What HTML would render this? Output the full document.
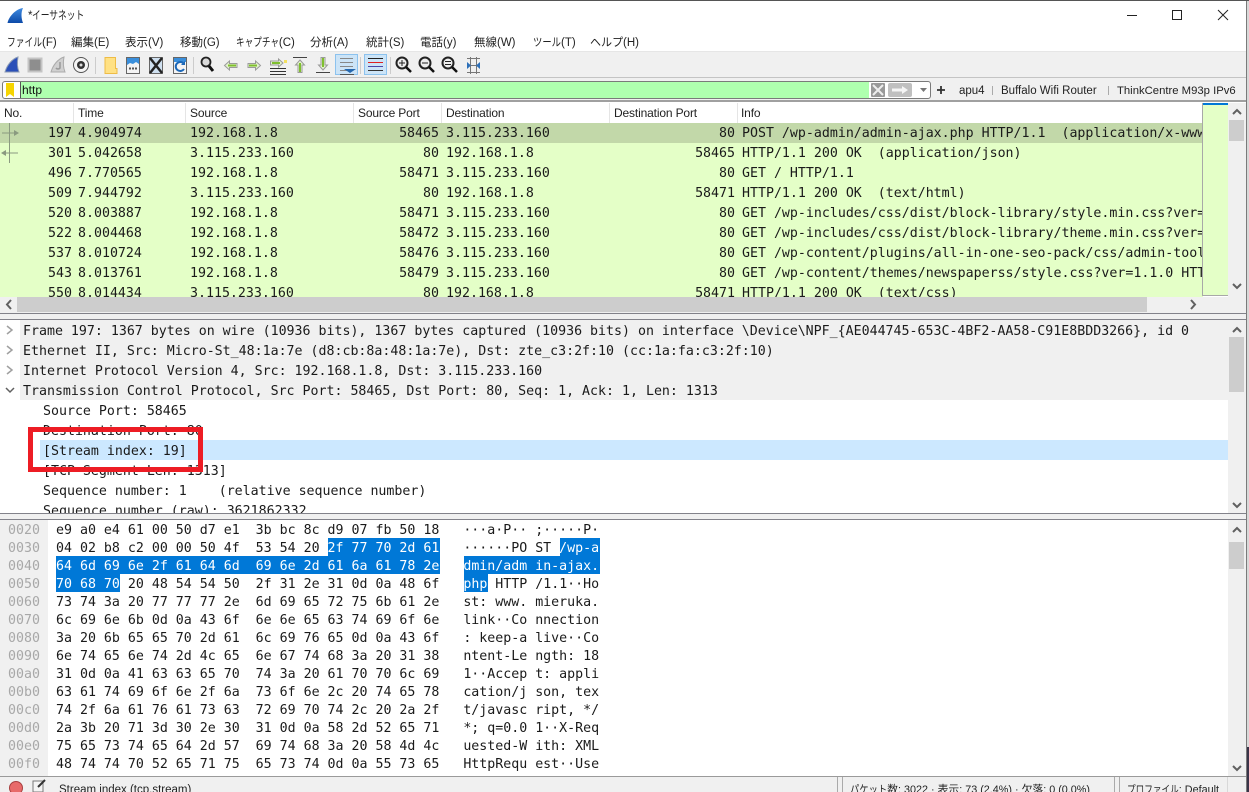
<!DOCTYPE html>
<html lang="ja"><head><meta charset="utf-8"><title>*イーサネット</title>
<style>
*{box-sizing:border-box}
html,body{margin:0;padding:0;width:1249px;height:792px;overflow:hidden;background:#fff}
body{position:relative;font-family:"Liberation Sans","Noto Sans CJK JP",sans-serif;font-size:12px;color:#111}
.a{position:absolute}
.t{position:absolute;white-space:pre}
.m{font-family:"DejaVu Sans Mono","Liberation Mono",monospace;font-size:13.28px;color:#1a1a1a}
.menu span{position:absolute;top:35px;line-height:16px;white-space:pre;font-size:11.5px;color:#222}
i.k{font-style:normal;display:inline-block;transform-origin:left center}
.hd span{position:absolute;top:103px;line-height:20px;font-size:12px;letter-spacing:-.15px;color:#222;white-space:pre}
.v{position:absolute;top:103px;width:1px;height:20px;background:#e5e5e5}
.row{position:absolute;left:0;width:1203px;height:20px;line-height:20px;background:#e4ffc7;overflow:hidden;white-space:pre}
.row span{position:absolute;top:1px;white-space:pre}
.no{right:1131px}.tm{left:78px}.sr{left:190px}.sp{right:764px}.de{left:446px}.dp{right:468px}.in{left:742px}
.dl{position:absolute;height:20px;line-height:24px;white-space:pre;overflow:hidden}
.hx{position:absolute;height:18px;line-height:22px;white-space:pre}
.sel{color:#fff}
.sb{position:absolute;height:18px;background:#0078d7}
.off{color:#a8a8a8}
svg{position:absolute;overflow:visible}
</style></head><body>

<!-- title -->
<div class="a" style="left:0;top:0;width:1249px;height:1px;background:#555"></div>
<svg style="left:7px;top:7px" width="17" height="17" viewBox="0 0 17 17"><defs><linearGradient id="g" x1="0" y1="0" x2="0" y2="1"><stop offset="0" stop-color="#3f8be0"/><stop offset="1" stop-color="#0c4aa8"/></linearGradient></defs><path d="M0.500 16C2 9 9 2 16 1c-2 4-2 10 0 15z" fill="url(#g)"/></svg>
<div class="t" style="left:28px;top:8px;line-height:16px;font-size:11.5px;color:#222">*<i class="k" style="transform:scaleX(.76);margin-right:-17px">イーサネット</i></div>
<svg style="left:1127px;top:9px" width="100" height="14" viewBox="0 0 100 14"><path d="M0 6.500h10" stroke="#222" fill="none"/><rect x="45.500" y="1.500" width="9" height="9" stroke="#222" fill="none"/><path d="M91 1l10 10M101 1L91 11" stroke="#222" fill="none"/></svg>

<!-- menu -->
<div class="menu">
<span style="left:7px"><i class="k" style="transform:scaleX(.76);margin-right:-11px">ファイル</i>(F)</span><span style="left:71px">編集(E)</span><span style="left:125px">表示(V)</span><span style="left:180px">移動(G)</span><span style="left:236px"><i class="k" style="transform:scaleX(.75);margin-right:-14.500px">キャプチャ</i>(C)</span><span style="left:310px">分析(A)</span><span style="left:366px">統計(S)</span><span style="left:420px">電話(y)</span><span style="left:474px">無線(W)</span><span style="left:533px"><i class="k" style="transform:scaleX(.81);margin-right:-6.500px">ツール</i>(T)</span><span style="left:590px"><i class="k" style="transform:scaleX(.96);margin-right:-1.500px">ヘルプ</i>(H)</span>
</div>

<!-- toolbar -->
<div class="a" style="left:0;top:51px;width:1246px;height:27px;background:#f0f0f0;border-top:1px solid #e6e6e6;border-bottom:1px solid #c4c4c4"></div>
<div class="a" style="left:335px;top:54px;width:23px;height:21px;background:#cce4f7;border:1px solid #8cc2ee"></div>
<div class="a" style="left:364px;top:54px;width:23px;height:21px;background:#cce4f7;border:1px solid #8cc2ee"></div>
<svg style="left:0;top:52px" width="490" height="26" viewBox="0 0 490 26">
<path d="M5 20C7 13 12 7 18 5c-1 5-1 10 1 15z" fill="#2a4fb8" stroke="#8a9ab5"/>
<rect x="28.500" y="6.500" width="13" height="13" fill="#8e8e8e" stroke="#c4c4c4" stroke-width="2"/>
<path d="M51 20c2-7 7-13 13-15-1 5-1 10 1 15z" fill="#d0d0d0" stroke="#aaa"/><path d="M60 10v6a2.500 2.500 0 0 1-4 0" fill="none" stroke="#999" stroke-width="1.500"/>
<circle cx="81" cy="13" r="7.500" fill="#f5f5f5" stroke="#555"/><circle cx="81" cy="13" r="4" fill="#333"/><circle cx="81" cy="13" r="1.500" fill="#ddd"/>
<path d="M95.500 5v17M193.500 5v17M360.500 5v17M390.500 5v17" stroke="#ccc"/>
<path d="M105 5.500h10.500v11h1.500v5h-12z" fill="#ffe184" stroke="#eebc46"/>
<rect x="126.500" y="5.500" width="13" height="16" fill="#f4f4f4" stroke="#666"/><path d="M127 6h12v6l-3-2-3 2-3-1-3 2z" fill="#3a8fdc"/><path d="M129 16.500h9" stroke="#555" stroke-width="2" stroke-dasharray="2 1"/>
<rect x="149.500" y="5.500" width="13" height="16" fill="#cfe0f0" stroke="#666"/><path d="M150 6l12 15M162 6L150 21" stroke="#222" stroke-width="2.500"/>
<rect x="173.500" y="5.500" width="13" height="16" fill="#f4f4f4" stroke="#666"/><path d="M174 6h12v4h-12z" fill="#3a8fdc"/><path d="M184 12a4.500 4.500 0 1 0 0 5" fill="none" stroke="#1c68b8" stroke-width="2"/><path d="M185 9v4h-4z" fill="#1c68b8"/>
<circle cx="206" cy="10" r="4.500" fill="#d9d9d9" stroke="#222" stroke-width="1.800"/><path d="M209 14l4 5" stroke="#111" stroke-width="3"/>
<path d="M224.500 13.500l5-4.500v2.500h7.500v4h-7.500v2.500z" fill="#e4f2cf" stroke="#9a9a9a"/><path d="M228 13.500h8" stroke="#7fbf2e" stroke-width="2"/>
<path d="M260.500 13.500l-5-4.500v2.500H248v4h7.500v2.500z" fill="#e4f2cf" stroke="#9a9a9a"/><path d="M249 13.500h8" stroke="#7fbf2e" stroke-width="2"/>
<path d="M270 16.500h16M270 19.500h16M270 22.500h16" stroke="#333"/><path d="M283 11l-4.500-4v2h-8v4h8v2z" fill="#e4f2cf" stroke="#9a9a9a"/><path d="M272 11h8" stroke="#7fbf2e" stroke-width="2"/><rect x="284" y="8" width="3" height="3" fill="#f3e060"/>
<path d="M293 5.500h14" stroke="#444"/><path d="M300 8l4.500 5H302v7.500h-4V13h-2.500z" fill="#e4f2cf" stroke="#9a9a9a"/><path d="M300 11v9" stroke="#7fbf2e" stroke-width="2"/>
<path d="M316 20.500h14" stroke="#444"/><path d="M323 18l4.500-5H325V5.500h-4V13h-2.500z" fill="#e4f2cf" stroke="#9a9a9a"/><path d="M323 6v9" stroke="#7fbf2e" stroke-width="2"/>
<path d="M340 6.500h13M340 10.500h13M340 14.500h13M340 18.500h13" stroke="#888" stroke-width="1"/><path d="M344 17h12l-6 4z" fill="#2468b0"/><path d="M340 22.500h14" stroke="#555"/>
<path d="M368 6.500h15" stroke="#222"/><path d="M368 10.500h15" stroke="#e02020"/><path d="M368 14.500h15" stroke="#4848a8"/><path d="M368 18.500h15" stroke="#333"/>
<g fill="#eee" stroke="#222" stroke-width="2"><circle cx="402" cy="11" r="5.500"/><circle cx="425" cy="11" r="5.500"/><circle cx="448" cy="11" r="5.500"/></g>
<path d="M406 15l5 5M429 15l5 5M452 15l5 5" stroke="#111" stroke-width="2.500"/>
<path d="M399 11h6M402 8v6M422 11h6M445 9.500h6M445 12.500h6" stroke="#222"/>
<path d="M467 6.500h13M467 13.500h13M467 20.500h13M470.500 5v17M476.500 5v17" stroke="#777"/><path d="M467 10l4 3.500-4 3.500zM480 10l-4 3.500 4 3.500z" fill="#2c6fb8"/>
</svg>

<!-- filter bar -->
<div class="a" style="left:0;top:78px;width:1246px;height:24px;background:#f0f0f0;border-bottom:2px solid #a0a0a0"></div>
<div class="a" style="left:2px;top:81px;width:929px;height:18px;background:#fff;border:1px solid #7a7a7a;border-radius:3px"></div>
<div class="a" style="left:20px;top:82px;width:849px;height:16px;background:#afffaf;border-left:1px solid #555"></div>
<svg style="left:6px;top:82px" width="9" height="16" viewBox="0 0 9 16"><path d="M0 1h8v14L4 12 0 15z" fill="#f6d400"/></svg>
<div class="t" style="left:22px;top:83px;line-height:15px;font-size:12px;color:#111">http</div>
<svg style="left:870px;top:82px" width="60" height="16" viewBox="0 0 60 16"><rect x="1" y="1" width="14" height="14" fill="#999" rx="1"/><path d="M3 3l10 10M13 3L3 13" stroke="#eee" stroke-width="2"/><rect x="18" y="1" width="24" height="14" rx="2" fill="#c0c0c0"/><path d="M22 6.500h10V4l6 4-6 4V9.500H22z" fill="#f5f5f5"/><path d="M50 6h7l-3.500 4z" fill="#777"/></svg>
<svg style="left:936px;top:85px" width="10" height="10" viewBox="0 0 10 10"><path d="M5 1v8M1 5h8" stroke="#333" stroke-width="1.800"/></svg>
<div class="t" style="left:959px;top:84px;line-height:15px;font-size:11.500px;color:#222">apu4</div>
<div class="a" style="left:992px;top:86px;width:1px;height:9px;background:#aaa"></div>
<div class="t" style="left:1001px;top:84px;line-height:15px;font-size:11.500px;color:#222">Buffalo Wifi Router</div>
<div class="a" style="left:1108px;top:86px;width:1px;height:9px;background:#aaa"></div>
<div class="t" style="left:1117px;top:84px;line-height:15px;font-size:11.300px;color:#222">ThinkCentre M93p IPv6</div>

<!-- list header -->
<div class="hd">
<span style="left:4px">No.</span><span style="left:78px">Time</span><span style="left:190px">Source</span><span style="left:358px">Source Port</span><span style="left:446px">Destination</span><span style="left:614px">Destination Port</span><span style="left:741px">Info</span>
</div>
<div class="v" style="left:73px"></div><div class="v" style="left:185px"></div><div class="v" style="left:353px"></div><div class="v" style="left:441px"></div><div class="v" style="left:609px"></div><div class="v" style="left:737px"></div>

<!-- packet list -->
<div class="a m" style="left:0;top:123px;width:1203px;height:174px;overflow:hidden">
<div class="row" style="top:0;background:#c2d8a9"><span class="no">197</span><span class="tm">4.904974</span><span class="sr">192.168.1.8</span><span class="sp">58465</span><span class="de">3.115.233.160</span><span class="dp">80</span><span class="in">POST /wp-admin/admin-ajax.php HTTP/1.1  (application/x-www-form-urlencoded)</span></div>
<div class="row" style="top:20px"><span class="no">301</span><span class="tm">5.042658</span><span class="sr">3.115.233.160</span><span class="sp">80</span><span class="de">192.168.1.8</span><span class="dp">58465</span><span class="in">HTTP/1.1 200 OK  (application/json)</span></div>
<div class="row" style="top:40px"><span class="no">496</span><span class="tm">7.770565</span><span class="sr">192.168.1.8</span><span class="sp">58471</span><span class="de">3.115.233.160</span><span class="dp">80</span><span class="in">GET / HTTP/1.1</span></div>
<div class="row" style="top:60px"><span class="no">509</span><span class="tm">7.944792</span><span class="sr">3.115.233.160</span><span class="sp">80</span><span class="de">192.168.1.8</span><span class="dp">58471</span><span class="in">HTTP/1.1 200 OK  (text/html)</span></div>
<div class="row" style="top:80px"><span class="no">520</span><span class="tm">8.003887</span><span class="sr">192.168.1.8</span><span class="sp">58471</span><span class="de">3.115.233.160</span><span class="dp">80</span><span class="in">GET /wp-includes/css/dist/block-library/style.min.css?ver=5.4</span></div>
<div class="row" style="top:100px"><span class="no">522</span><span class="tm">8.004468</span><span class="sr">192.168.1.8</span><span class="sp">58472</span><span class="de">3.115.233.160</span><span class="dp">80</span><span class="in">GET /wp-includes/css/dist/block-library/theme.min.css?ver=5.4</span></div>
<div class="row" style="top:120px"><span class="no">537</span><span class="tm">8.010724</span><span class="sr">192.168.1.8</span><span class="sp">58476</span><span class="de">3.115.233.160</span><span class="dp">80</span><span class="in">GET /wp-content/plugins/all-in-one-seo-pack/css/admin-toolbar</span></div>
<div class="row" style="top:140px"><span class="no">543</span><span class="tm">8.013761</span><span class="sr">192.168.1.8</span><span class="sp">58479</span><span class="de">3.115.233.160</span><span class="dp">80</span><span class="in">GET /wp-content/themes/newspaperss/style.css?ver=1.1.0 HTTP/1.1</span></div>
<div class="row" style="top:160px"><span class="no">550</span><span class="tm">8.014434</span><span class="sr">3.115.233.160</span><span class="sp">80</span><span class="de">192.168.1.8</span><span class="dp">58471</span><span class="in">HTTP/1.1 200 OK  (text/css)</span></div>
</div>
<svg style="left:0;top:123px" width="20" height="40" viewBox="0 0 20 40"><path d="M9.500 0v40M2 10h12M2 30h16" stroke="#8a9a80"/><path d="M19 10l-5-3v6z" fill="#8a9a80"/><path d="M1 30l5-3v6z" fill="#8a9a80"/></svg>

<!-- minimap and list scrollbar -->
<div class="a" style="left:1202px;top:103px;width:26px;height:193px;background:#e4ffc7;border:1px solid #a8a8a8;border-top:0;border-right:0"></div>
<div class="a" style="left:1203px;top:103px;width:25px;height:2px;background:#0078d7"></div>
<div class="a" style="left:1228px;top:103px;width:18px;height:194px;background:#f0f0f0"></div>
<div class="a" style="left:1229px;top:120px;width:15px;height:21px;background:#cdcdcd"></div>
<svg style="left:1228px;top:103px" width="18" height="194" viewBox="0 0 18 194"><path d="M5 11l4-4 4 4M5 181l4 4 4-4" fill="none" stroke="#606060" stroke-width="2"/></svg>

<!-- horizontal scrollbar -->
<div class="a" style="left:0;top:297px;width:1246px;height:16px;background:#f0f0f0"></div>
<div class="a" style="left:17px;top:297px;width:1130px;height:15px;background:#cdcdcd"></div>
<svg style="left:0;top:297px" width="1246" height="16" viewBox="0 0 1246 16"><path d="M11 3L7 7.500l4 4.500M1191 3l4 4.500-4 4.500" fill="none" stroke="#606060" stroke-width="2"/></svg>

<!-- splitter 1 -->
<div class="a" style="left:0;top:313px;width:1246px;height:7px;background:#f0f0f0;border-top:1px solid #82828a;border-bottom:1px solid #82828a"></div>

<!-- details -->
<div class="a" style="left:20px;top:320px;width:1208px;height:80px;background:#f0f0f0"></div>
<div class="a" style="left:40px;top:440px;width:1188px;height:20px;background:#cce8ff"></div>
<div class="a m" style="left:0;top:320px;width:1228px;height:193px;overflow:hidden">
<div class="dl" style="left:23px;top:0;width:1200px">Frame 197: 1367 bytes on wire (10936 bits), 1367 bytes captured (10936 bits) on interface \Device\NPF_{AE044745-653C-4BF2-AA58-C91E8BDD3266}, id 0</div>
<div class="dl" style="left:23px;top:20px">Ethernet II, Src: Micro-St_48:1a:7e (d8:cb:8a:48:1a:7e), Dst: zte_c3:2f:10 (cc:1a:fa:c3:2f:10)</div>
<div class="dl" style="left:23px;top:40px">Internet Protocol Version 4, Src: 192.168.1.8, Dst: 3.115.233.160</div>
<div class="dl" style="left:23px;top:60px">Transmission Control Protocol, Src Port: 58465, Dst Port: 80, Seq: 1, Ack: 1, Len: 1313</div>
<div class="dl" style="left:43px;top:80px">Source Port: 58465</div>
<div class="dl" style="left:43px;top:100px">Destination Port: 80</div>
<div class="dl" style="left:43px;top:120px">[Stream index: 19]</div>
<div class="dl" style="left:43px;top:140px">[TCP Segment Len: 1313]</div>
<div class="dl" style="left:43px;top:160px">Sequence number: 1    (relative sequence number)</div>
<div class="dl" style="left:43px;top:180px">Sequence number (raw): 3621862332</div>
</div>
<svg style="left:0;top:320px" width="20" height="80" viewBox="0 0 20 80"><path d="M7 6l5 4-5 4M7 26l5 4-5 4M7 46l5 4-5 4" fill="none" stroke="#a0a0a0" stroke-width="1.500"/><path d="M6 68l4 4 4-4" fill="none" stroke="#606060" stroke-width="1.500"/></svg>
<div class="a" style="left:1228px;top:320px;width:18px;height:193px;background:#f0f0f0"></div>
<div class="a" style="left:1229px;top:337px;width:15px;height:55px;background:#cdcdcd"></div>
<svg style="left:1228px;top:320px" width="18" height="193" viewBox="0 0 18 193"><path d="M5 12l4-4 4 4M5 183l4 4 4-4" fill="none" stroke="#606060" stroke-width="2"/></svg>

<!-- splitter 2 -->
<div class="a" style="left:0;top:513px;width:1246px;height:7px;background:#f0f0f0;border-top:1px solid #82828a;border-bottom:1px solid #82828a"></div>

<!-- hex -->
<div class="a" style="left:0;top:520px;width:48px;height:256px;background:#f0f0f0"></div>
<div class="sb" style="left:328px;top:538px;width:112px"></div>
<div class="sb" style="left:56px;top:556px;width:384px"></div>
<div class="sb" style="left:56px;top:574px;width:64px"></div>
<div class="sb" style="left:560px;top:538px;width:40px"></div>
<div class="sb" style="left:464px;top:556px;width:136px"></div>
<div class="sb" style="left:464px;top:574px;width:24px"></div>
<div class="a m" style="left:0;top:520px;width:1228px;height:256px;overflow:hidden">
<div class="hx off" style="left:8px;top:0">0020</div><div class="hx" style="left:56px;top:0">e9 a0 e4 61 00 50 d7 e1  3b bc 8c d9 07 fb 50 18   ···a·P·· ;·····P·</div>
<div class="hx off" style="left:8px;top:18px">0030</div><div class="hx" style="left:56px;top:18px">04 02 b8 c2 00 00 50 4f  53 54 20 <span class="sel">2f 77 70 2d 61</span>   ······PO ST <span class="sel">/wp-a</span></div>
<div class="hx off" style="left:8px;top:36px">0040</div><div class="hx" style="left:56px;top:36px"><span class="sel">64 6d 69 6e 2f 61 64 6d  69 6e 2d 61 6a 61 78 2e</span>   <span class="sel">dmin/adm in-ajax.</span></div>
<div class="hx off" style="left:8px;top:54px">0050</div><div class="hx" style="left:56px;top:54px"><span class="sel">70 68 70</span> 20 48 54 54 50  2f 31 2e 31 0d 0a 48 6f   <span class="sel">php</span> HTTP /1.1··Ho</div>
<div class="hx off" style="left:8px;top:72px">0060</div><div class="hx" style="left:56px;top:72px">73 74 3a 20 77 77 77 2e  6d 69 65 72 75 6b 61 2e   st: www. mieruka.</div>
<div class="hx off" style="left:8px;top:90px">0070</div><div class="hx" style="left:56px;top:90px">6c 69 6e 6b 0d 0a 43 6f  6e 6e 65 63 74 69 6f 6e   link··Co nnection</div>
<div class="hx off" style="left:8px;top:108px">0080</div><div class="hx" style="left:56px;top:108px">3a 20 6b 65 65 70 2d 61  6c 69 76 65 0d 0a 43 6f   : keep-a live··Co</div>
<div class="hx off" style="left:8px;top:126px">0090</div><div class="hx" style="left:56px;top:126px">6e 74 65 6e 74 2d 4c 65  6e 67 74 68 3a 20 31 38   ntent-Le ngth: 18</div>
<div class="hx off" style="left:8px;top:144px">00a0</div><div class="hx" style="left:56px;top:144px">31 0d 0a 41 63 63 65 70  74 3a 20 61 70 70 6c 69   1··Accep t: appli</div>
<div class="hx off" style="left:8px;top:162px">00b0</div><div class="hx" style="left:56px;top:162px">63 61 74 69 6f 6e 2f 6a  73 6f 6e 2c 20 74 65 78   cation/j son, tex</div>
<div class="hx off" style="left:8px;top:180px">00c0</div><div class="hx" style="left:56px;top:180px">74 2f 6a 61 76 61 73 63  72 69 70 74 2c 20 2a 2f   t/javasc ript, */</div>
<div class="hx off" style="left:8px;top:198px">00d0</div><div class="hx" style="left:56px;top:198px">2a 3b 20 71 3d 30 2e 30  31 0d 0a 58 2d 52 65 71   *; q=0.0 1··X-Req</div>
<div class="hx off" style="left:8px;top:216px">00e0</div><div class="hx" style="left:56px;top:216px">75 65 73 74 65 64 2d 57  69 74 68 3a 20 58 4d 4c   uested-W ith: XML</div>
<div class="hx off" style="left:8px;top:234px">00f0</div><div class="hx" style="left:56px;top:234px">48 74 74 70 52 65 71 75  65 73 74 0d 0a 55 73 65   HttpRequ est··Use</div>
</div>
<div class="a" style="left:1228px;top:520px;width:18px;height:256px;background:#f0f0f0"></div>
<div class="a" style="left:1229px;top:542px;width:15px;height:27px;background:#cdcdcd"></div>
<svg style="left:1228px;top:520px" width="18" height="256" viewBox="0 0 18 256"><path d="M5 12l4-4 4 4M5 246l4 4 4-4" fill="none" stroke="#606060" stroke-width="2"/></svg>

<!-- red annotation -->
<div class="a" style="left:28px;top:427px;width:175px;height:45px;border:5px solid #ed1c24"></div>

<!-- status bar -->
<div class="a" style="left:0;top:776px;width:1246px;height:16px;background:#f0f0f0;border-top:1px solid #9a9a9a"></div>
<svg style="left:0;top:777px" width="60" height="15" viewBox="0 0 60 15"><circle cx="16" cy="11" r="6.500" fill="#e86a6a" stroke="#a84040"/><rect x="33" y="4" width="10" height="11" fill="#f4f4f4" stroke="#777"/><path d="M38 10l7-7" stroke="#333" stroke-width="2"/></svg>
<div class="t" style="left:59px;top:782px;line-height:16px;font-size:11.500px;color:#222">Stream index (tcp.stream)</div>
<div class="a" style="left:837px;top:777px;width:6px;height:15px;border-left:1px solid #aaa;border-right:1px solid #aaa"></div>
<div class="t" style="left:850px;top:782px;line-height:16px;font-size:10.800px;color:#222"><i class="k" style="transform:scaleX(.86);margin-right:-6px">パケット</i>数: 3022 · 表示: 73 (2.4%) · 欠落: 0 (0.0%)</div>
<div class="a" style="left:1114px;top:777px;width:6px;height:15px;border-left:1px solid #aaa;border-right:1px solid #aaa"></div>
<div class="t" style="left:1127px;top:782px;line-height:16px;font-size:10.800px;color:#222"><i class="k" style="transform:scaleX(.8);margin-right:-13px">プロファイル</i>: Default</div>
<div class="a" style="left:1227px;top:777px;width:1px;height:15px;background:#d8d8d8"></div>

<!-- window border -->
<div class="a" style="left:1246px;top:1px;width:1px;height:791px;background:#7a7a7a"></div>
<div class="a" style="left:1247px;top:1px;width:2px;height:746px;background:#d8d8d8"></div>
<div class="a" style="left:1247px;top:747px;width:2px;height:45px;background:#3a3448"></div>
</body></html>
